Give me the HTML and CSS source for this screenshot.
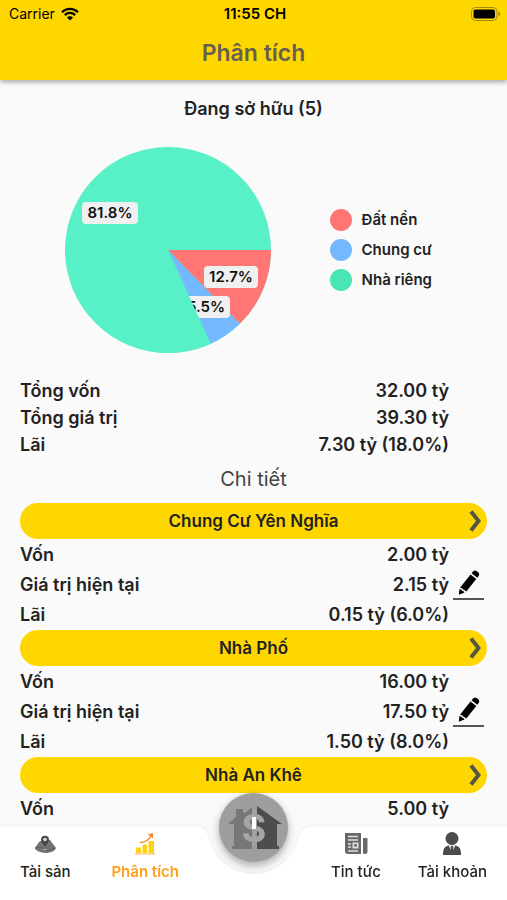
FILE: index.html
```html
<!DOCTYPE html>
<html lang="vi">
  <head>
    <meta charset="UTF-8" />
    <meta name="viewport" content="width=device-width, initial-scale=1" />
    <title>Phân tích</title>
    <link rel="stylesheet" href="styles.css">
  </head>

  <body>
    <header class="app-header">
      <div class="status-bar">
        <div class="carrier">
          <span>Carrier</span>
          <svg width="18" height="14" viewBox="0 0 18 14" aria-hidden="true">
            <path d="M1 5.2C5.500 .8 12.500 .8 17 5.200M3.800 8.100C6.800 5.200 11.200 5.200 14.200 8.100" fill="none" stroke="#000" stroke-width="2.300" />
            <path d="M9 13.500L6 10.500C7.700 8.900 10.300 8.900 12 10.500Z" />
          </svg>
        </div>
        <span class="clock">11:55 CH</span>
        <svg class="battery" width="30" height="14" viewBox="0 0 30 14" aria-hidden="true">
          <rect x="0.500" y="0.500" width="25.500" height="13" rx="4" fill="none" stroke="#a18a13" />
          <rect x="2.500" y="2.500" width="21.500" height="9" rx="2" />
          <path d="M27.500 4.500C29.800 5.500 29.800 8.500 27.500 9.500Z" fill="#a18a13" />
        </svg>
      </div>
      <h1>Phân tích</h1>
    </header>

    <main class="content">
      <h2 class="owned">Đang sở hữu (5)</h2>

      <!-- Pie chart -->
      <section class="chart">
        <svg class="pie" width="206" height="206" viewBox="-103 -103 206 206" role="img" aria-label="Cơ cấu tài sản">
          <circle r="103" fill="#58f0c6" />
          <path d="M0 0H103A103 103 0 0 1 71.800 73.800Z" fill="#ff7675" />
          <rect x="36" y="16" width="54" height="22" rx="4" fill="#f0f0f0" />
          <text x="63" y="32">12.7%</text>
          <path d="M0 0L71.800 73.800A103 103 0 0 1 42.700 93.700Z" fill="#74b9ff" />
          <rect x="15" y="46" width="47" height="22" rx="4" fill="#f0f0f0" />
          <text x="38" y="62">5.5%</text>
          <path d="M0 0L42.700 93.700A103 103 0 0 1 -20 101L-20 0Z" fill="#58f0c6" />
          <rect x="-86" y="-48" width="56" height="22" rx="4" fill="#f0f0f0" />
          <text x="-58" y="-32">81.8%</text>
        </svg>
        <ul class="legend">
          <li><span class="dot land"></span>Đất nền</li>
          <li><span class="dot flat"></span>Chung cư</li>
          <li><span class="dot house"></span>Nhà riêng</li>
        </ul>
      </section>

      <dl class="figures">
        <div class="row"><dt>Tổng vốn</dt><dd>32.00 tỷ</dd></div>
        <div class="row"><dt>Tổng giá trị</dt><dd>39.30 tỷ</dd></div>
        <div class="row"><dt>Lãi</dt><dd>7.30 tỷ (18.0%)</dd></div>
      </dl>

      <h2 class="details-title">Chi tiết</h2>

      <!-- Assets -->
      <section class="asset">
        <button class="asset-name" type="button">
          Chung Cư Yên Nghĩa
          <svg class="chevron" width="12" height="22" viewBox="0 0 12 22" aria-hidden="true"><path d="M2 1.500L9.500 11L2 20.500" /></svg>
        </button>
        <dl class="figures asset-figures">
          <div class="row"><dt>Vốn</dt><dd>2.00 tỷ</dd></div>
          <div class="row editable">
            <dt>Giá trị hiện tại</dt><dd>2.15 tỷ</dd>
            <dd class="edit-cell">
              <button class="edit" type="button" aria-label="Sửa giá trị">
                <svg width="24" height="26" viewBox="0 0 24 26" aria-hidden="true">
                  <path d="M14.500 3.200L16.500 1.200Q18 0 19.800 1.200L21.500 2.500Q23 4 21.800 5.800L20.300 7.800Z" />
                  <path d="M13.500 4.400L19.300 9L9.300 21.600Q8.300 20 6.500 19.700Q5.300 18 3 17.800Z" />
                  <path d="M2.500 19Q4.500 19.300 5.100 20.800Q6.800 21 7.500 22.600L1.800 24.800Z" />
                </svg>
              </button>
            </dd>
          </div>
          <div class="row"><dt>Lãi</dt><dd>0.15 tỷ (6.0%)</dd></div>
        </dl>
      </section>

      <section class="asset">
        <button class="asset-name" type="button">
          Nhà Phố
          <svg class="chevron" width="12" height="22" viewBox="0 0 12 22" aria-hidden="true"><path d="M2 1.500L9.500 11L2 20.500" /></svg>
        </button>
        <dl class="figures asset-figures">
          <div class="row"><dt>Vốn</dt><dd>16.00 tỷ</dd></div>
          <div class="row editable">
            <dt>Giá trị hiện tại</dt><dd>17.50 tỷ</dd>
            <dd class="edit-cell">
              <button class="edit" type="button" aria-label="Sửa giá trị">
                <svg width="24" height="26" viewBox="0 0 24 26" aria-hidden="true">
                  <path d="M14.500 3.200L16.500 1.200Q18 0 19.800 1.200L21.500 2.500Q23 4 21.800 5.800L20.300 7.800Z" />
                  <path d="M13.500 4.400L19.300 9L9.300 21.600Q8.300 20 6.500 19.700Q5.300 18 3 17.800Z" />
                  <path d="M2.500 19Q4.500 19.300 5.100 20.800Q6.800 21 7.500 22.600L1.800 24.800Z" />
                </svg>
              </button>
            </dd>
          </div>
          <div class="row"><dt>Lãi</dt><dd>1.50 tỷ (8.0%)</dd></div>
        </dl>
      </section>

      <section class="asset">
        <button class="asset-name" type="button">
          Nhà An Khê
          <svg class="chevron" width="12" height="22" viewBox="0 0 12 22" aria-hidden="true"><path d="M2 1.500L9.500 11L2 20.500" /></svg>
        </button>
        <dl class="figures asset-figures">
          <div class="row"><dt>Vốn</dt><dd>5.00 tỷ</dd></div>
        </dl>
      </section>
    </main>

    <!-- Bottom navigation -->
    <nav class="tab-bar">
      <div class="tabs tabs-left">
        <a class="tab" href="#tai-san">
          <svg width="24" height="24" viewBox="0 0 24 24" aria-hidden="true">
            <path d="M2 16L6 10L10 8H17L20 12L23 16Q22 20 14 21Q6 21 2 17Z" fill="#737373" />
            <path d="M2 16Q8 14 11 17T22 16" fill="none" stroke="#5f5f5f" />
            <path d="M12 14.500Q8 10.500 8 7.800A4 4 0 0 1 16 7.800Q16 10.500 12 14.500Z" fill="#4a4a4a" />
            <circle cx="12" cy="7.500" r="1.800" fill="#ddd" />
            <path d="M9.500 17.500H14" stroke="#aaa" />
          </svg>
          Tài sản
        </a>
        <a class="tab active" href="#phan-tich">
          <svg width="24" height="24" viewBox="0 0 24 24" aria-hidden="true">
            <path d="M3 15.500H8V21H3ZM9.500 12.500H14V21H9.500ZM15.500 9H21V21H15.500Z" fill="#ffd21a" />
            <path d="M2 22H22" stroke="#ffc06a" stroke-width="1.300" />
            <path d="M7 10.500Q14.500 10.500 18 4" fill="none" stroke="#f28a35" stroke-width="1.500" />
            <path d="M15 2.500L20 .8L20 6.500Z" fill="#f28a35" />
          </svg>
          Phân tích
        </a>
      </div>

      <div class="notch">
        <svg class="notch-shape" width="125" height="74" viewBox="0 0 125 74" aria-hidden="true">
          <path d="M0 0H2Q15 0 17.500 11.500A46 46 0 0 0 107.500 11.500Q110 0 123 0H125V74H0Z" fill="#fff" />
        </svg>
        <button class="home-button" type="button" aria-label="Thêm tài sản">
          <svg width="56" height="48" viewBox="0 0 56 48" aria-hidden="true">
            <path d="M26 3V45H6V42H8V20H2L10 13V5H17V8L19 9Z" fill="#777" />
            <path d="M31 2L56 20H51V42H53V45H31Z" fill="#4b4d4e" />
            <text class="dollar" x="28" y="38">$</text>
            <path d="M26 13H30V25H26Z" fill="#fff" />
          </svg>
        </button>
      </div>

      <div class="tabs tabs-right">
        <a class="tab" href="#tin-tuc">
          <svg width="24" height="24" viewBox="0 0 24 24" aria-hidden="true">
            <path d="M1 1H17V22H4Q1 22 1 19Z" fill="#696969" />
            <path d="M19 6H23.500V20Q23.500 22 21 22T19 20Z" fill="#696969" />
            <path d="M4 4.500H14M4 8H14M4 12H7M4 15H7M4 19H14" stroke="#e0e0e0" stroke-width="1.500" />
            <rect x="8.500" y="10.500" width="6" height="6" fill="#e0e0e0" />
            <circle cx="11.500" cy="13.200" r="1.500" fill="#696969" />
          </svg>
          Tin tức
        </a>
        <a class="tab" href="#tai-khoan">
          <svg width="24" height="24" viewBox="0 0 24 24" aria-hidden="true">
            <path d="M3 23Q3 15.500 6 14.500L12 12L18 14.500Q21 15.500 21 23Z" fill="#4b4b4b" />
            <path d="M8.500 13L12 21L15.500 13Z" fill="#e8e8e8" />
            <path d="M11 14H13L13.500 19L12 22L10.500 19Z" fill="#4b4b4b" />
            <circle cx="12" cy="6.500" r="6.500" fill="#4b4b4b" />
          </svg>
          Tài khoản
        </a>
      </div>
    </nav>
  </body>
</html>
```

FILE: styles.css
```css
* {
  box-sizing: border-box;
}

body {
  display: flex;
  flex-direction: column;
  height: 100vh;
  margin: 0;
  background-color: #fafafa;
  color: #222;
  font-family: Inter, 'Noto Sans', sans-serif;
  font-size: 18px;
  font-weight: 600;
  overflow: hidden;
}

h1,
h2,
dl,
dd,
ul {
  margin: 0;
  padding: 0;
}

button {
  padding: 0;
  border: none;
  background: none;
  color: inherit;
  font: inherit;
  cursor: pointer;
}

/* Header */
.app-header {
  position: relative;
  flex: none;
  height: 80px;
  background-color: #ffd700;
  box-shadow: 0 2px 5px rgba(0, 0, 0, 0.35);
  text-align: center;
}

.status-bar {
  display: grid;
  grid-template-columns: 1fr auto 1fr;
  align-items: center;
  height: 27px;
  padding: 0 6px 0 9px;
  color: #000;
  font-size: 15px;
}

.carrier {
  display: flex;
  align-items: center;
  gap: 6px;
  font-size: 14px;
  font-weight: 400;
}

.battery {
  justify-self: end;
}

.app-header h1 {
  color: #666053;
  font-size: 23px;
  font-weight: 600;
  line-height: 52px;
}

/* Content */
.content {
  flex: 1;
  padding: 16px 20px 90px;
  overflow-y: auto;
  scrollbar-width: none;
}

.owned {
  font-size: 18px;
  font-weight: 600;
  line-height: 26px;
  text-align: center;
}

.chart {
  display: flex;
  align-items: center;
  justify-content: space-between;
  margin: 25px 55px 24px 45px;
}

.pie text {
  fill: #111;
  font-size: 15px;
  font-weight: 600;
  text-anchor: middle;
}

.legend {
  display: grid;
  gap: 8px;
  font-size: 15px;
  line-height: 22px;
  list-style: none;
}

.legend li {
  display: flex;
  gap: 10px;
}

.dot {
  width: 22px;
  height: 22px;
  border-radius: 50%;
}

.land {
  background-color: #ff7675;
}

.flat {
  background-color: #74b9ff;
}

.house {
  background-color: #48e5b7;
}

/* Label and value rows */
.row {
  display: grid;
  grid-template-columns: 1fr auto 38px;
  align-items: center;
  height: 27px;
}

.row.editable {
  height: 33px;
}

.edit-cell {
  padding-left: 4px;
}

.edit {
  display: flex;
  justify-content: center;
  width: 31px;
  height: 30px;
  border-bottom: 2px solid #555;
}

.details-title {
  margin: 7px 0 10px;
  color: #444;
  font-size: 20px;
  font-weight: 400;
  line-height: 28px;
  text-align: center;
}

.asset-name {
  display: grid;
  grid-template-columns: 1fr auto 1fr;
  align-items: center;
  width: 100%;
  height: 36px;
  padding: 0 6px;
  border-radius: 18px;
  background-color: #ffd700;
  font-size: 17px;
}

.asset-name::before {
  content: '';
}

.chevron {
  justify-self: end;
  fill: none;
  stroke: #555540;
  stroke-width: 4;
}

.asset-figures {
  padding: 2px 0;
}

/* Bottom navigation */
.tab-bar {
  position: fixed;
  right: 0;
  bottom: 0;
  left: 0;
  display: grid;
  grid-template-columns: 1fr 125px 1fr;
  height: 74px;
  filter: drop-shadow(0 -1px 1px rgba(0, 0, 0, 0.06));
}

.tabs {
  display: flex;
  justify-content: space-between;
  background-color: #fff;
}

.tabs-left {
  padding: 6px 12px 0 20px;
}

.tabs-right {
  padding: 6px 20px 0 15px;
}

.tab {
  display: flex;
  flex-direction: column;
  align-items: center;
  gap: 6px;
  color: #222;
  font-size: 15px;
  font-weight: 500;
  line-height: 20px;
  text-decoration: none;
}

.tab.active {
  color: #ff9f1a;
  font-weight: 600;
}

.notch {
  position: relative;
}

.notch-shape {
  display: block;
}

.home-button {
  position: absolute;
  top: -33px;
  left: 28px;
  display: grid;
  place-items: center;
  width: 69px;
  height: 69px;
  border-radius: 50%;
  background-color: #9e9e9e;
  box-shadow: 0 4px 8px rgba(0, 0, 0, 0.3);
}

.dollar {
  fill: #a5a5a5;
  font-size: 38px;
  font-weight: 700;
  text-anchor: middle;
}
```
